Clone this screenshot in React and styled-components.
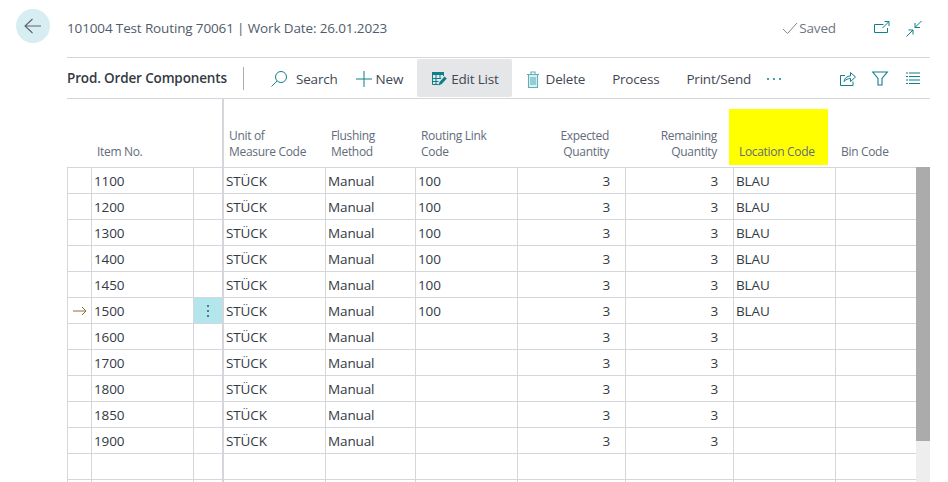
import React from "react";
import styled, { createGlobalStyle } from "styled-components";

const Global = createGlobalStyle`
  html, body { margin: 0; padding: 0; background: #fff; overflow: hidden; }
  body { font-family: "Open Sans", "Noto Sans", sans-serif; }
`;
const Page = styled.div`
  width: 948px; height: 482px; overflow: hidden; display: grid;
  grid-template-columns: 67px 863px; grid-template-rows: 57px 1fr;
`;
const BackCell = styled.div`padding: 9px 0 0 16px;`;
const BackButton = styled.div`
  width: 34px; height: 34px; border-radius: 50%; background: #d6eef1;
  display: flex; align-items: center; justify-content: center;
`;
const TitleBar = styled.div`
  display: flex; align-items: center; padding: 0 0 2px 0; height: 57px; box-sizing: border-box;
`;
const Title = styled.div`
  flex: 1; font-size: 13.5px; color: #505c6d; letter-spacing: -0.14px; white-space: nowrap;
`;
const Saved = styled.div`
  display: flex; align-items: center; gap: 1px; font-size: 13.5px; color: #6b7582; letter-spacing: -0.14px; margin-right: 38px;
`;
const HeadIcons = styled.div`display: flex; align-items: flex-start; gap: 16px; margin-right: 8px;`;
const Main = styled.div`grid-column: 2; display: flex; flex-direction: column; min-width: 0;`;
const Toolbar = styled.div`
  height: 40px; box-sizing: content-box; border-top: 1px solid #d4d6dc; border-bottom: 1px solid #d4d6dc;
  display: flex; align-items: center; position: relative;
`;
const PageName = styled.div`
  font-size: 13.5px; font-weight: 600; color: #333a44; letter-spacing: -0.15px; white-space: nowrap; width: 176px;
`;
const Divider = styled.div`width: 1px; height: 23px; background: #a9adb4;`;
const Action = styled.div`
  display: flex; align-items: center; gap: ${p => p.$gap ?? 5}px; height: 38px; box-sizing: border-box;
  margin-left: ${p => p.$ml ?? 0}px; padding: 2px ${p => p.$padR ?? 0}px 0 ${p => p.$padL ?? 0}px;
  font-size: 13.5px; color: #3f4854; letter-spacing: -0.2px;
  border-radius: 2px; background: ${p => (p.$active ? "#e5e6e8" : "transparent")}; white-space: nowrap;
`;
const Spacer = styled.div`flex: 1;`;
const ToolIcons = styled.div`display: flex; align-items: center; gap: 16px; margin-right: 10px;`;
const TableArea = styled.div`position: relative; display: flex; flex: 1; min-height: 0;`;
const Grid = styled.table`
  border-collapse: separate; border-spacing: 0; table-layout: fixed; width: 849px; flex: none;
`;
const Head = styled.th`
  height: 69px; box-sizing: border-box; vertical-align: bottom; padding: 0 ${p => (p.$right ? 17 : 5)}px 7px 5px;
  font-size: 12px; line-height: 16px; font-weight: 400; color: #626c7a; letter-spacing: -0.32px;
  text-align: ${p => (p.$right ? "right" : "left")}; position: relative;
  border-right: ${p => (p.$thick ? "2px solid #d4d6dc" : "none")};
  border-bottom: 1px solid #d4d6dc;
`;
const Highlight = styled.span`
  position: absolute; left: -5px; top: 10px; width: 99px; height: 56px; background: #ffff00; z-index: 0;
`;
const HeadLabel = styled.span`position: relative; z-index: 1; white-space: nowrap;`;
const Cell = styled.td`
  height: 26px; box-sizing: border-box; padding: 0 ${p => (p.$right ? 15 : 2)}px 0 2px;
  font-size: 13.5px; color: #333a44; letter-spacing: -0.12px; white-space: nowrap;
  text-align: ${p => (p.$right ? "right" : "left")};
  border-right: ${p => (p.$thick ? "2px solid #d4d6dc" : p.$last ? "none" : "1px solid #d4d6dc")};
  border-left: ${p => (p.$first ? "1px solid #d4d6dc" : "none")};
  border-bottom: 1px solid #d4d6dc;
  background: ${p => (p.$tint ? "#b3e5ec" : "transparent")};
`;
const CenterWrap = styled.div`display: flex; align-items: center; justify-content: center; height: 100%;`;
const Scrollbar = styled.div`
  width: 14px; flex: none; margin-top: 68px; background: #eeeeee; align-self: stretch;
`;
const Thumb = styled.div`height: 274px; background: #ababab;`;

const T = "#0f7f8a";
const I = ({ w = 18, h = 18, vb, sw = 1, children }) => (
  <svg width={w} height={h} viewBox={vb ?? `0 0 ${w} ${h}`} fill="none" stroke={T} strokeWidth={sw} style={{ display: "block", flex: "none" }}>{children}</svg>
);

const columns = [
  { w: 25 }, { w: 102, label: ["Item No."] }, { w: 30, thick: true },
  { w: 102, label: ["Unit of", "Measure Code"] }, { w: 90, label: ["Flushing", "Method"] },
  { w: 102, label: ["Routing Link", "Code"] }, { w: 108, label: ["Expected", "Quantity"], right: true },
  { w: 108, label: ["Remaining", "Quantity"], right: true }, { w: 102, label: ["Location Code"], hl: true },
  { w: 80, label: ["Bin Code"] },
];
const items = ["1100", "1200", "1300", "1400", "1450", "1500", "1600", "1700", "1800", "1850", "1900"];

export default function App() {
  return (
    <Page>
      <Global />
      <BackCell>
        <BackButton>
          <svg width="18" height="16" viewBox="0 0 18 16" fill="none" stroke="#5a6470" strokeWidth="1.1" style={{ display: "block" }}>
            <path d="M1 8h16M8.500 1 1 8l7.500 7" />
          </svg>
        </BackButton>
      </BackCell>
      <TitleBar>
        <Title>101004 Test Routing 70061 | Work Date: 26.01.2023</Title>
        <Saved>
          <svg width="16" height="12" viewBox="0 0 16 12" fill="none" stroke="#7d8691" strokeWidth="1" style={{ display: "block" }}>
            <path d="m1 7 4.500 4.500L15 1" />
          </svg>
          Saved
        </Saved>
        <HeadIcons>
          <I w={16} h={19}>
            <path d="M9.500 6.500H.5v8h13V10" />
            <path d="M8.500 10 14.500 4M10.500 3.500H15V8" />
          </I>
          <I w={16} h={19}>
            <path d="M.500 18.500 7 12M2.500 12H7v4.500M15.500 3 9 9.500M14 9.500H9V5" />
          </I>
        </HeadIcons>
      </TitleBar>
      <Main>
        <Toolbar>
          <PageName>Prod. Order Components</PageName>
          <Divider />
          <Action $ml={26} $gap={8}>
            <I>
              <circle cx="11" cy="7" r="5.500" />
              <path d="m7 11-5.500 5.500" />
            </I>
            Search
          </Action>
          <Action $ml={18} $gap={4}>
            <I w={16} h={16}><path d="M8 0v16M0 8h16" /></I>
            New
          </Action>
          <Action $ml={14} $padL={15} $padR={13} $gap={4} $active>
            <svg width="15" height="14" viewBox="0 0 15 14" style={{ display: "block", flex: "none" }}>
              <path d="M0 0h12v3H0z" fill={T} />
              <path d="M.500 3v9.500h6M4 3v9.500M8 3v3.500M11.500 3v1M.500 6.500H9M.500 9.500H6.500" fill="none" stroke={T} strokeWidth="1" />
              <path d="M6.500 13.500l1-3.500 5-5.500 2.300 2-5 5.500z" fill={T} />
            </svg>
            Edit List
          </Action>
          <Action $ml={15} $gap={7}>
            <svg width="12" height="17" viewBox="0 0 12 17" fill="#dcf1f3" stroke="#5fb0b8" strokeWidth="1.1" style={{ display: "block", flex: "none" }}>
              <path d="M4 3V1h4v2" fill="none" />
              <path d="M1.500 3.500V16.500h9V3.500z" />
              <path d="M0 3.500h12M4 6v8M6 6v8M8 6v8" fill="none" />
            </svg>
            Delete
          </Action>
          <Action $ml={27}>Process</Action>
          <Action $ml={27}>Print/Send</Action>
          <Action $ml={15}>
            <svg width="16" height="4" viewBox="0 0 16 4" style={{ display: "block" }}>
              <circle cx="2" cy="2" r="1" fill={T} /><circle cx="8" cy="2" r="1" fill={T} /><circle cx="14" cy="2" r="1" fill={T} />
            </svg>
          </Action>
          <Spacer />
          <ToolIcons>
            <I w={16} h={15}>
              <path d="M5 4.500H.5v10H13v-4" />
              <path d="M4 10.500c.5-3.500 3-5.500 6.500-5.500V1.500l5 4.500-5 4.500V7.500C8 7.500 6 8.500 4 10.500z" />
            </I>
            <I w={18} h={15} sw={1.1}>
              <path d="M.700 1h14.600L10 7.500v6.500H6V7.500z" />
            </I>
            <I w={14} h={12} sw={1.1}>
              <path d="M0 1h2M3 1h11M0 4.500h2M3 4.500h11M0 8h2M3 8h11M0 11.500h2M3 11.500h11" />
            </I>
          </ToolIcons>
        </Toolbar>
        <TableArea>
          <Grid>
            <colgroup>
              {columns.map((c, i) => <col key={i} style={{ width: c.w }} />)}
            </colgroup>
            <thead>
              <tr>
                {columns.map((c, i) => (
                  <Head key={i} $right={c.right} $thick={c.thick}>
                    {c.hl && <Highlight />}
                    {c.label && (
                      <HeadLabel>
                        {c.label.map((l, j) => <React.Fragment key={j}>{j > 0 && <br />}{l}</React.Fragment>)}
                      </HeadLabel>
                    )}
                  </Head>
                ))}
              </tr>
            </thead>
            <tbody>
              {items.map((n, i) => (
                <tr key={n}>
                  <Cell $first>
                    {n === "1500" && (
                      <CenterWrap>
                        <svg width="14" height="10" viewBox="0 0 14 10" fill="none" stroke="#8a6d3b" strokeWidth="1" style={{ display: "block" }}>
                          <path d="M0 5h13M9 1l4 4-4 4" />
                        </svg>
                      </CenterWrap>
                    )}
                  </Cell>
                  <Cell>{n}</Cell>
                  <Cell $thick $tint={n === "1500"}>
                    {n === "1500" && (
                      <CenterWrap>
                        <svg width="4" height="14" viewBox="0 0 4 14" style={{ display: "block" }}>
                          <circle cx="2" cy="2" r="1" fill="#33505c" /><circle cx="2" cy="7" r="1" fill="#33505c" /><circle cx="2" cy="12" r="1" fill="#33505c" />
                        </svg>
                      </CenterWrap>
                    )}
                  </Cell>
                  <Cell>STÜCK</Cell>
                  <Cell>Manual</Cell>
                  <Cell>{i < 6 ? "100" : ""}</Cell>
                  <Cell $right>3</Cell>
                  <Cell $right>3</Cell>
                  <Cell>{i < 6 ? "BLAU" : ""}</Cell>
                  <Cell $last />
                </tr>
              ))}
              <tr>
                <Cell $first /><Cell /><Cell $thick /><Cell /><Cell /><Cell /><Cell /><Cell /><Cell /><Cell $last />
              </tr>
              <tr>
                <Cell $first /><Cell /><Cell $thick /><Cell /><Cell /><Cell /><Cell /><Cell /><Cell /><Cell $last />
              </tr>
            </tbody>
          </Grid>
          <Scrollbar><Thumb /></Scrollbar>
        </TableArea>
      </Main>
    </Page>
  );
}
